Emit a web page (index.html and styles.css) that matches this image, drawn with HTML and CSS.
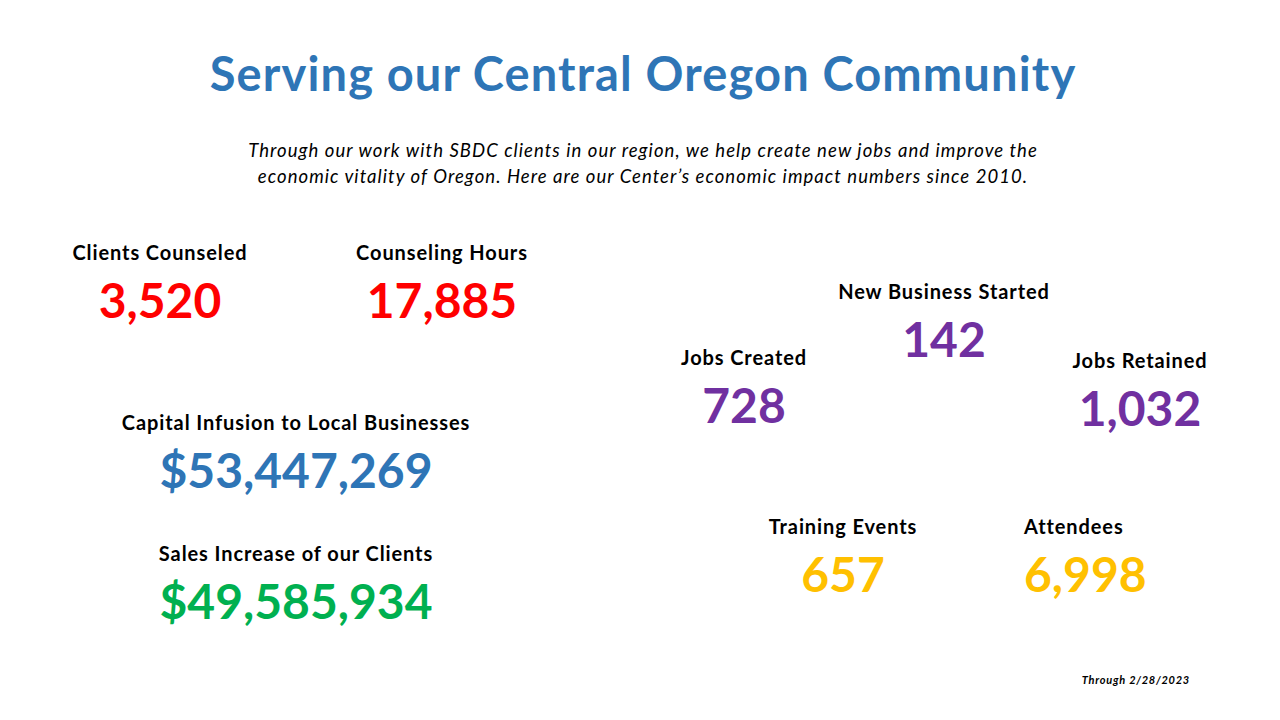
FILE: index.html
```html
<!DOCTYPE html>
<html lang="en">
<head>
<meta charset="utf-8">
<title>Serving our Central Oregon Community</title>
<link rel="stylesheet" href="styles.css">
</head>
<body>
<div class="slide">
  <header class="header">
    <h1 class="title">Serving our Central Oregon Community</h1>
    <p class="subtitle">Through our work with SBDC clients in our region, we help create new jobs and improve the<br>economic vitality of Oregon. Here are our Center’s economic impact numbers since 2010.</p>
  </header>
  <main class="main">
    <section class="col-left">
      <div class="pair">
        <div class="stat">
          <div class="label">Clients Counseled</div>
          <div class="num red">3,520</div>
        </div>
        <div class="stat">
          <div class="label">Counseling Hours</div>
          <div class="num red">17,885</div>
        </div>
      </div>
      <div class="stat wide capital">
        <div class="label">Capital Infusion to Local Businesses</div>
        <div class="num blue">$53,447,269</div>
      </div>
      <div class="stat wide sales">
        <div class="label">Sales Increase of our Clients</div>
        <div class="num green">$49,585,934</div>
      </div>
    </section>
    <section class="col-right">
      <div class="stat newbiz">
        <div class="label">New Business Started</div>
        <div class="num purple">142</div>
      </div>
      <div class="jobs">
        <div class="stat">
          <div class="label">Jobs Created</div>
          <div class="num purple">728</div>
        </div>
        <div class="stat retained">
          <div class="label">Jobs Retained</div>
          <div class="num purple">1,032</div>
        </div>
      </div>
      <div class="training">
        <div class="stat">
          <div class="label">Training Events</div>
          <div class="num gold">657</div>
        </div>
        <div class="stat left">
          <div class="label">Attendees</div>
          <div class="num gold">6,998</div>
        </div>
      </div>
    </section>
  </main>
  <footer class="footnote">Through 2/28/2023</footer>
</div>
</body>
</html>
```

FILE: styles.css
```css
html, body {
  margin: 0;
  padding: 0;
  background: #ffffff;
}

body {
  font-family: Lato, "Open Sans", "Liberation Sans", sans-serif;
  color: #000000;
}

.slide {
  width: 1280px;
  height: 720px;
  overflow: hidden;
  display: flex;
  flex-direction: column;
  box-sizing: border-box;
  padding-top: 45px;
}

.header {
  display: flex;
  flex-direction: column;
  align-items: center;
}

.title {
  margin: 0;
  font-size: 47px;
  line-height: 56px;
  font-weight: 700;
  letter-spacing: 1.15px;
  color: #2e75b6;
  text-align: center;
  transform: translateX(3px);
}

.subtitle {
  margin: 36px 0 0;
  font-size: 18.5px;
  line-height: 26px;
  letter-spacing: 1.05px;
  font-style: italic;
  font-weight: 400;
  text-align: center;
  transform: translateX(3px);
}

.main {
  display: flex;
  margin-top: 51px;
}

.col-left {
  width: 620px;
  display: flex;
  flex-direction: column;
}

.col-right {
  flex: 1;
  display: flex;
  flex-direction: column;
}

.stat {
  width: 240px;
  display: flex;
  flex-direction: column;
  align-items: center;
  flex-shrink: 0;
}

.stat.wide {
  width: 400px;
}

.stat.left {
  align-items: flex-start;
}

.label {
  font-size: 20px;
  line-height: 24px;
  font-weight: 700;
  letter-spacing: 0.9px;
  white-space: nowrap;
}

.num {
  margin-top: 8px;
  font-size: 48px;
  line-height: 56px;
  font-weight: 700;
  white-space: nowrap;
}

.red { color: #ff0000; }
.blue { color: #2e75b6; }
.green { color: #00b050; }
.purple { color: #7030a0; }
.gold { color: #ffc000; }

.pair {
  display: flex;
  padding-left: 40px;
  gap: 42px;
}

.capital {
  margin: 82px 0 0 96px;
}

.sales {
  margin: 43px 0 0 96px;
}

.newbiz {
  margin: 39px 0 0 204px;
}

.jobs {
  display: flex;
  align-items: flex-start;
  margin-top: -22px;
  padding-left: 4px;
  gap: 156px;
}

.retained {
  margin-top: 3px;
}

.training {
  display: flex;
  align-items: flex-start;
  margin-top: 78px;
  padding-left: 103px;
  gap: 61px;
}

.footnote {
  margin-top: auto;
  margin-bottom: 34px;
  align-self: flex-end;
  padding-right: 90px;
  font-size: 11px;
  line-height: 12px;
  font-weight: 700;
  font-style: italic;
  letter-spacing: 0.75px;
}
```
